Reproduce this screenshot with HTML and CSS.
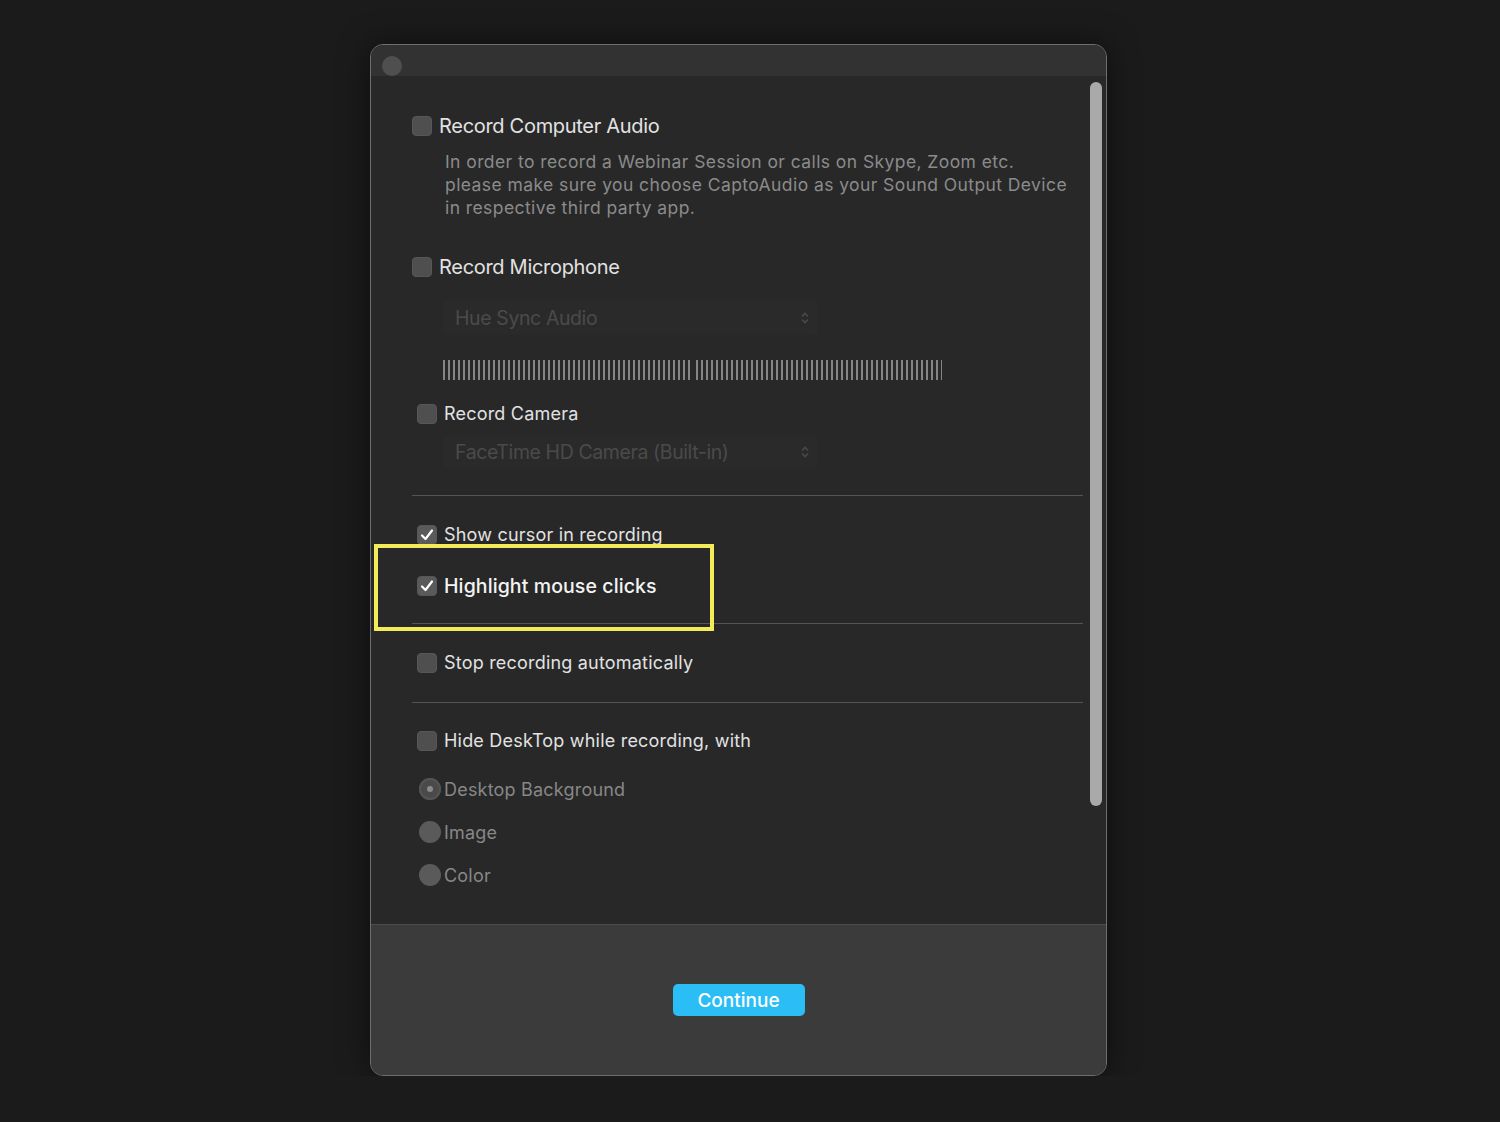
FILE: index.html
```html
<!DOCTYPE html>
<html lang="en">
<head>
    <meta charset="UTF-8">
    <title>Recording Options</title>
    <link rel="stylesheet" href="styles.css">
</head>
<body>
    <div class="window">
        <div class="titlebar"><span class="light"></span></div>
        <div class="content">
            <div class="scroller"></div>

            <div class="check big first"><span class="box"></span>Record Computer Audio</div>
            <p class="note">In order to record a Webinar Session or calls on Skype, Zoom etc.<br>please make sure you choose CaptoAudio as your Sound Output Device<br>in respective third party app.</p>

            <div class="check big mic"><span class="box"></span>Record Microphone</div>
            <div class="popup mic-popup">
                <span>Hue Sync Audio</span>
                <svg class="chev" width="8" height="12" viewBox="0 0 8 12"><path d="M1 4.5 4 1.5 7 4.5M1 7.5 4 10.5 7 7.5" fill="none" stroke="#4a4a4a" stroke-width="1.6"/></svg>
            </div>
            <div class="meter"><span class="bars left"></span><span class="bars right"></span></div>

            <div class="check cam"><span class="box"></span>Record Camera</div>
            <div class="popup cam-popup">
                <span>FaceTime HD Camera (Built-in)</span>
                <svg class="chev" width="8" height="12" viewBox="0 0 8 12"><path d="M1 4.5 4 1.5 7 4.5M1 7.5 4 10.5 7 7.5" fill="none" stroke="#4a4a4a" stroke-width="1.6"/></svg>
            </div>

            <div class="sep sep-1"></div>

            <div class="check cursor"><span class="box on"><svg width="16" height="16" viewBox="0 0 16 16"><path d="M3 8.5 6.5 12 13 3.5" fill="none" stroke="#fff" stroke-width="2.2" stroke-linecap="round" stroke-linejoin="round"/></svg></span>Show cursor in recording</div>
            <div class="check clicks"><span class="box on"><svg width="16" height="16" viewBox="0 0 16 16"><path d="M3 8.5 6.5 12 13 3.5" fill="none" stroke="#fff" stroke-width="2.2" stroke-linecap="round" stroke-linejoin="round"/></svg></span>Highlight mouse clicks
                <span class="marker"></span>
            </div>

            <div class="sep sep-2"></div>

            <div class="check stop"><span class="box"></span>Stop recording automatically</div>

            <div class="sep sep-3"></div>

            <div class="check hide"><span class="box"></span>Hide DeskTop while recording, with</div>
            <div class="radio r1"><span class="dot sel"></span>Desktop Background</div>
            <div class="radio r2"><span class="dot"></span>Image</div>
            <div class="radio r3"><span class="dot"></span>Color</div>
        </div>
        <div class="footer">
            <button class="continue">Continue</button>
        </div>
    </div>
</body>
</html>
```

FILE: styles.css
```css
body {
    margin: 0;
    background-color: #1b1b1b;
    font-family: Inter, "Noto Sans", sans-serif;
}
.window {
    width: 737px;
    margin: 44px 0 0 370px;
    box-sizing: border-box;
    border: 1px solid #6e6e6e;
    border-radius: 13px;
    overflow: hidden;
    background: #282828;
    box-shadow: 0 0 30px rgba(0, 0, 0, 0.5);
}
.titlebar {
    height: 31px;
    background: #323232;
    display: flex;
    align-items: center;
    padding-left: 11px;
}
.light {
    width: 20px;
    height: 20px;
    border-radius: 50%;
    background: #4f4f4f;
    margin-top: 11px;
}
.content {
    position: relative;
    height: 848px;
    box-sizing: border-box;
    padding: 0 23px 0 41px;
    display: flex;
    flex-direction: column;
    align-items: flex-start;
    background: #282828;
}
.scroller {
    position: absolute;
    top: 6px;
    left: 719px;
    width: 12px;
    height: 724px;
    border-radius: 6px;
    background: #a9a9a9;
}

/* checkbox rows */
.check {
    position: relative;
    display: flex;
    align-items: center;
    height: 20px;
    font-size: 18px;
    line-height: 20px;
    color: #e2e2e2;
    margin-left: 5px;
    letter-spacing: 0.2px;
}
.check .box {
    width: 20px;
    height: 20px;
    box-sizing: border-box;
    border-radius: 4px;
    background: #4f4f4f;
    border: 1px solid #575757;
    margin-right: 7px;
    flex-shrink: 0;
    display: flex;
    align-items: center;
    justify-content: center;
}
.check .box.on {
    background: #5a5a5a;
}
.check.big {
    font-size: 20px;
    margin-left: 0;
    letter-spacing: -0.3px;
}
.first { margin-top: 40px; }
.mic { margin-top: 38px; }
.cam { margin-top: 24px; }
.cursor { margin-top: 29px; }
.clicks {
    margin-top: 31px;
    font-size: 19.5px;
    font-weight: 500;
    color: #f4f4f4;
    letter-spacing: 0.1px;
}
.stop { margin-top: 29px; }
.hide { margin-top: 28px; }

.marker {
    position: absolute;
    left: -43px;
    top: -32px;
    width: 340px;
    height: 87px;
    box-sizing: border-box;
    border: 4px solid #f3eb58;
}

.note {
    margin: 14px 0 0 33px;
    font-size: 17.5px;
    line-height: 23px;
    color: #8b8b8b;
    letter-spacing: 0.42px;
}

/* disabled popups */
.popup {
    margin-left: 31px;
    width: 375px;
    box-sizing: border-box;
    padding: 0 9px 0 12px;
    display: flex;
    align-items: center;
    justify-content: space-between;
    border-radius: 5px;
    background: #2a2a2a;
    color: #4a4a4a;
    font-size: 19.5px;
    letter-spacing: -0.4px;
}
.mic-popup {
    margin-top: 23px;
    height: 35px;
}
.cam-popup {
    margin-top: 12px;
    height: 32px;
}

.meter {
    margin: 25px 0 0 31px;
    height: 20px;
    display: flex;
    gap: 5px;
}
.bars {
    display: block;
    height: 20px;
    background: repeating-linear-gradient(90deg, #858585 0 2px, transparent 2px 5px);
}
.bars.left { width: 248px; }
.bars.right { width: 246px; }

.sep {
    width: 671px;
    height: 1px;
    background: #555;
}
.sep-1 { margin-top: 27px; }
.sep-2 { margin-top: 27px; }
.sep-3 { margin-top: 29px; }

/* radio rows */
.radio {
    display: flex;
    align-items: center;
    height: 22px;
    margin-left: 7px;
    font-size: 18px;
    color: #878787;
    letter-spacing: 0.2px;
}
.radio .dot {
    width: 22px;
    height: 22px;
    border-radius: 50%;
    background: #5a5a5a;
    margin-right: 3px;
    display: flex;
    align-items: center;
    justify-content: center;
}
.radio .dot.sel {
    background: #4a4a4a;
    box-shadow: inset 0 0 0 2px #545454;
}
.radio .dot.sel::after {
    content: "";
    width: 6px;
    height: 6px;
    border-radius: 50%;
    background: #8a8a8a;
}
.r1 { margin-top: 27px; }
.r2 { margin-top: 21px; }
.r3 { margin-top: 21px; }

.footer {
    height: 150px;
    border-top: 1px solid #4c4c4c;
    background: #3b3b3b;
    display: flex;
    align-items: center;
    justify-content: center;
}
.continue {
    width: 132px;
    height: 32px;
    border: none;
    border-radius: 5px;
    background: #2abdf6;
    color: #fff;
    font-family: Inter, "Noto Sans", sans-serif;
    font-size: 19px;
    font-weight: 500;
    padding: 0;
}
```
